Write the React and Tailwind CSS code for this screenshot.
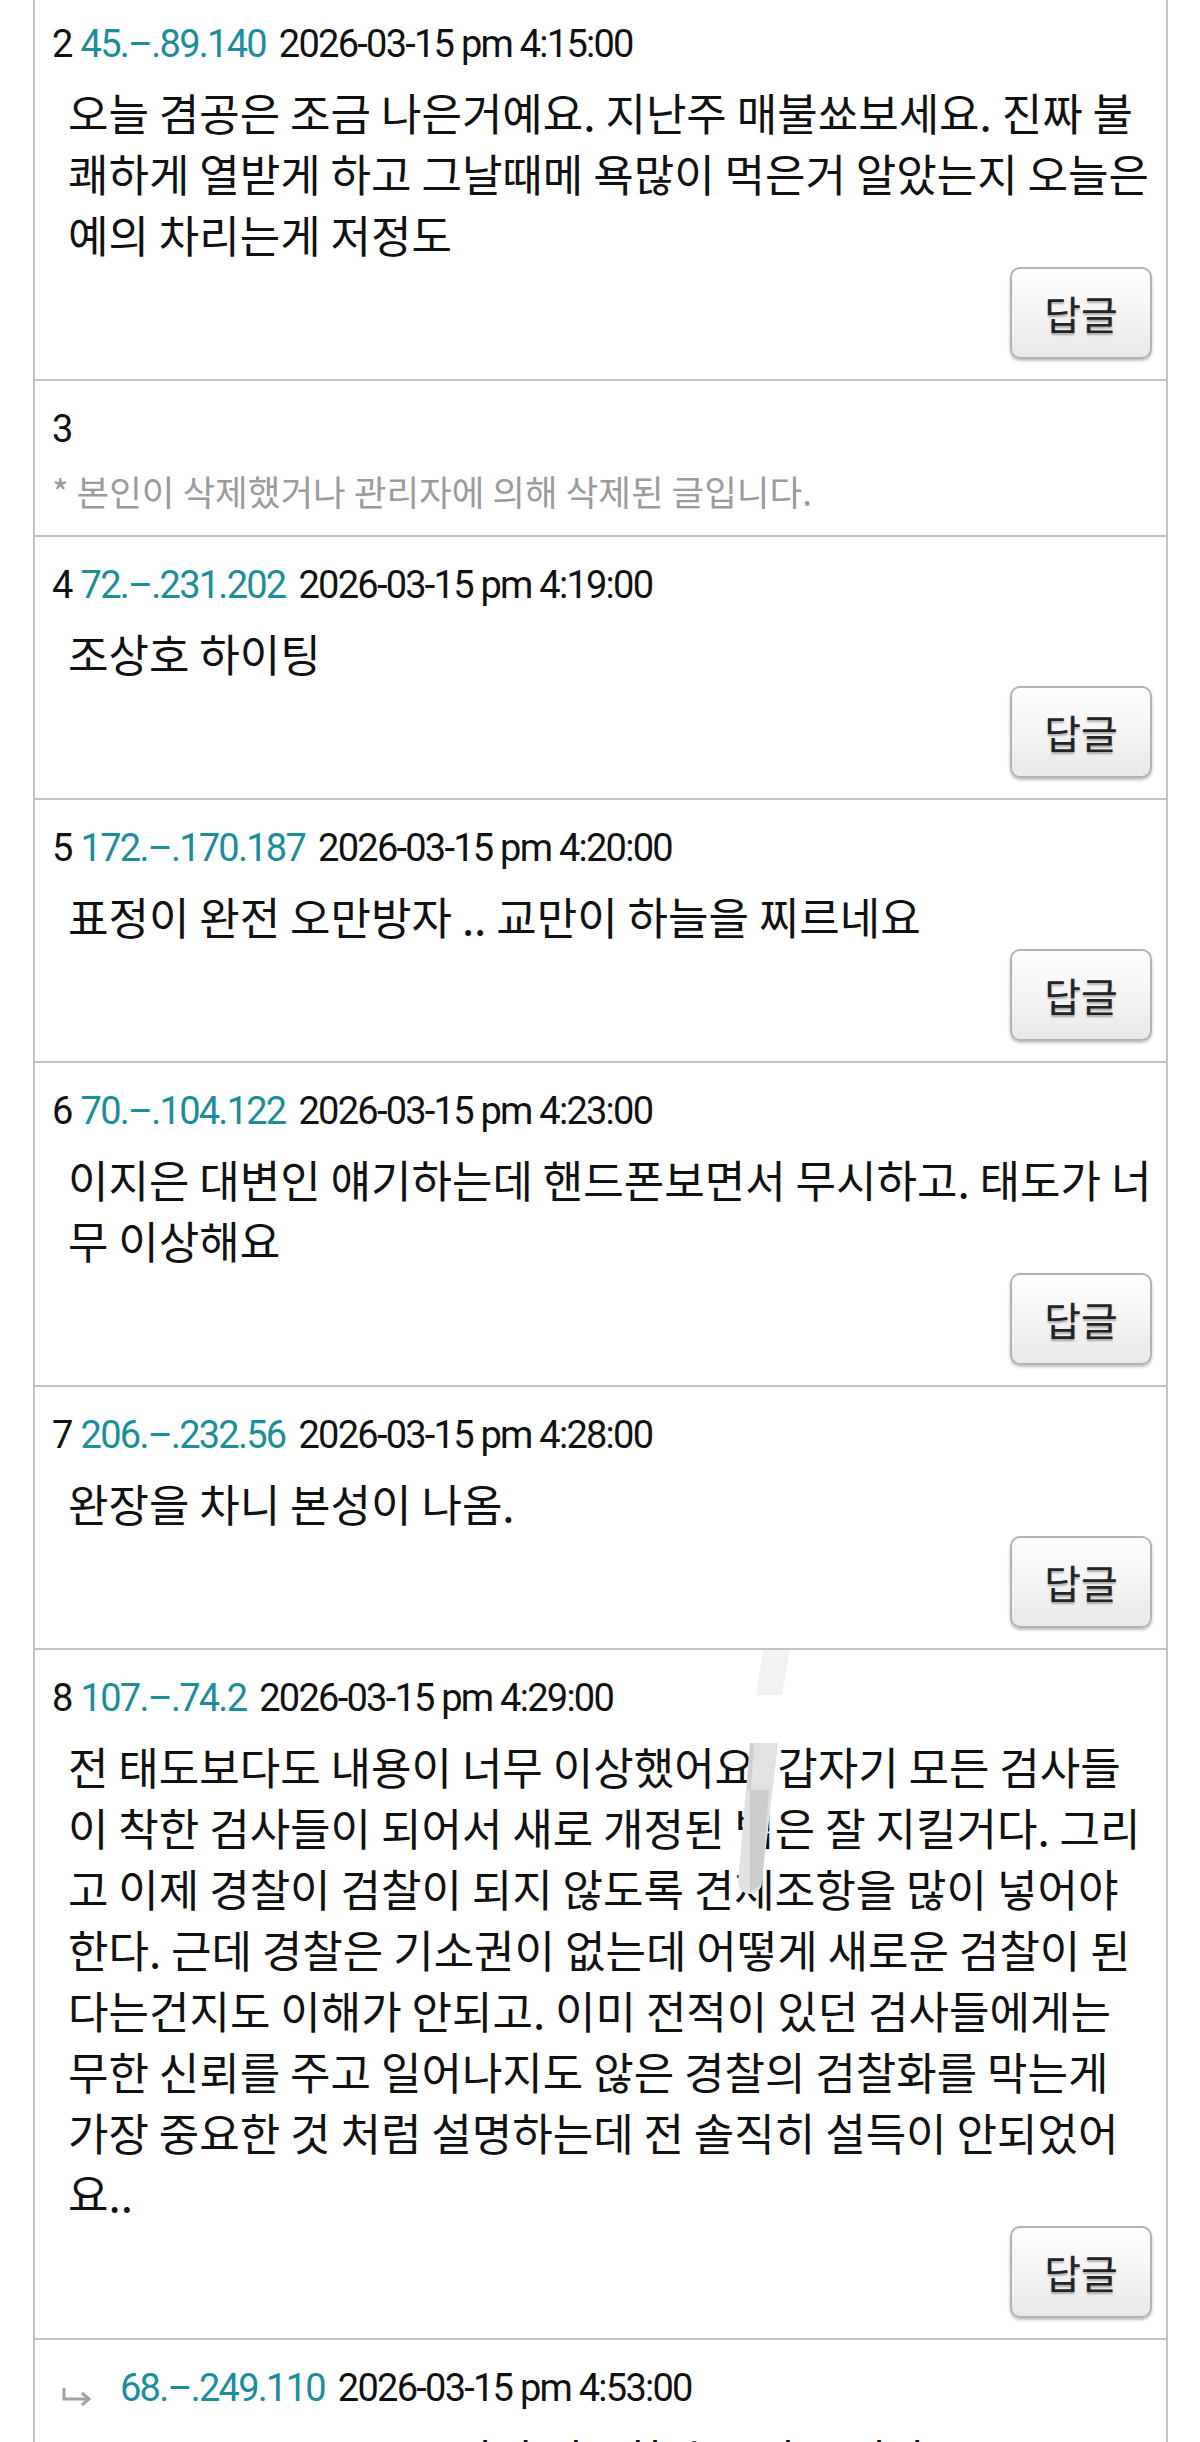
import React from "react";

const comments = [
  {
    no: "2",
    ip: "45.–.89.140",
    date: "2026-03-15 pm 4:15:00",
    lines: [
      "오늘 겸공은 조금 나은거예요. 지난주 매불쑈보세요. 진짜 불",
      "쾌하게 열받게 하고 그날때메 욕많이 먹은거 알았는지 오늘은",
      "예의 차리는게 저정도",
    ],
  },
  { no: "3", deleted: true },
  { no: "4", ip: "72.–.231.202", date: "2026-03-15 pm 4:19:00", lines: ["조상호 하이팅"] },
  {
    no: "5",
    ip: "172.–.170.187",
    date: "2026-03-15 pm 4:20:00",
    lines: ["표정이 완전 오만방자 .. 교만이 하늘을 찌르네요"],
  },
  {
    no: "6",
    ip: "70.–.104.122",
    date: "2026-03-15 pm 4:23:00",
    lines: ["이지은 대변인 얘기하는데 핸드폰보면서 무시하고. 태도가 너", "무 이상해요"],
  },
  { no: "7", ip: "206.–.232.56", date: "2026-03-15 pm 4:28:00", lines: ["완장을 차니 본성이 나옴."] },
  {
    no: "8",
    ip: "107.–.74.2",
    date: "2026-03-15 pm 4:29:00",
    lines: [
      "전 태도보다도 내용이 너무 이상했어요. 갑자기 모든 검사들",
      "이 착한 검사들이 되어서 새로 개정된 법은 잘 지킬거다. 그리",
      "고 이제 경찰이 검찰이 되지 않도록 견제조항을 많이 넣어야",
      "한다. 근데 경찰은 기소권이 없는데 어떻게 새로운 검찰이 된",
      "다는건지도 이해가 안되고. 이미 전적이 있던 검사들에게는",
      "무한 신뢰를 주고 일어나지도 않은 경찰의 검찰화를 막는게",
      "가장 중요한 것 처럼 설명하는데 전 솔직히 설득이 안되었어",
      "요..",
    ],
  },
];

const reply = { ip: "68.–.249.110", date: "2026-03-15 pm 4:53:00", text: "저런 저급한 수준이 드러나" };

const Header = ({ no, ip, date, isReply }) => (
  <div className="h-[48px] leading-[48px] text-[38px] tracking-[-1.75px] text-[#111] whitespace-nowrap flex items-center font-['Roboto',sans-serif]">
    {isReply ? (
      <svg width="32" height="22" viewBox="0 0 32 22" className="ml-[10px] mt-[18px] mr-[26px]">
        <path d="M2 2 V13 H26" fill="none" stroke="#a3a3a3" strokeWidth="3" />
        <path d="M20 7 L27 13 L20 19" fill="none" stroke="#a3a3a3" strokeWidth="3" />
      </svg>
    ) : (
      <span className="mr-[9px]">{no}</span>
    )}
    <span className="text-[#1b8e9a]">{ip}</span>
    <span className="ml-[13px]">{date}</span>
  </div>
);

const ReplyButton = () => (
  <div className="mt-[2px] flex justify-end">
    <button className="w-[142px] h-[92px] rounded-[10px] border-2 border-[#b3b3b3] bg-linear-to-b from-white to-[#e9e9e9] shadow-[0_2px_3px_rgba(0,0,0,0.25)] text-[40px] text-[#242424] [text-shadow:0_2px_2px_rgba(0,0,0,0.3)] font-['Noto_Sans_CJK_KR',sans-serif]">
      답글
    </button>
  </div>
);

const Comment = ({ c }) => {
  if (c.deleted) {
    return (
      <div className="border-t-2 border-[#c2c2c2] pt-[24px] pb-[22px] pl-[17px] pr-[14px]">
        <Header no={c.no} ip="" date="" />
        <div className="mt-[16px] text-[35.5px] leading-[44px] text-[#9b9b9b] whitespace-nowrap font-['Noto_Sans_CJK_KR',sans-serif]">
          * 본인이 삭제했거나 관리자에 의해 삭제된 글입니다.
        </div>
      </div>
    );
  }
  return (
    <div className="border-t-2 border-[#c2c2c2] pt-[24px] pb-[20px] pl-[17px] pr-[14px]">
      <Header no={c.no} ip={c.ip} date={c.date} />
      <div className="mt-[14px] pl-[16px] text-[44px] leading-[61px] text-[#111] whitespace-nowrap font-['Noto_Sans_CJK_KR',sans-serif]">
        {c.lines.map((line, i) => (
          <div key={i}>{line}</div>
        ))}
      </div>
      <ReplyButton />
    </div>
  );
};

export default function App() {
  return (
    <div className="relative h-[2442px] overflow-hidden bg-white">
      <div className="ml-[33px] w-[1135px] -mt-[6px] border-x-2 border-[#c2c2c2]">
        {comments.map((c) => (
          <Comment key={c.no} c={c} />
        ))}
        <div className="border-t-2 border-[#c2c2c2] pt-[24px] pl-[17px] pr-[14px]">
          <Header ip={reply.ip} date={reply.date} isReply />
          <div className="mt-[16px] pl-[400px] text-[44px] leading-[61px] text-[#111] whitespace-nowrap font-['Noto_Sans_CJK_KR',sans-serif]">
            {reply.text}
          </div>
        </div>
      </div>

      {/* stray scroll mark lying over the text */}
      <svg className="absolute left-0 top-0 pointer-events-none" width="1200" height="2442">
        <polygon points="763,1650 790,1650 782,1695 756,1695" fill="#f2f2f2" />
        <path d="M750 1743 L778 1743 L762 1882 A12 12 0 0 1 738 1882 Z" fill="#e2e2e2" />
        <path d="M750 1790 L769 1790 L762 1884 L750 1892 Z" fill="#cdcdcd" />
        <path d="M750 1743 L754 1743 L751 1790 L747 1790 Z" fill="#d0d0d0" />
      </svg>
    </div>
  );
}
